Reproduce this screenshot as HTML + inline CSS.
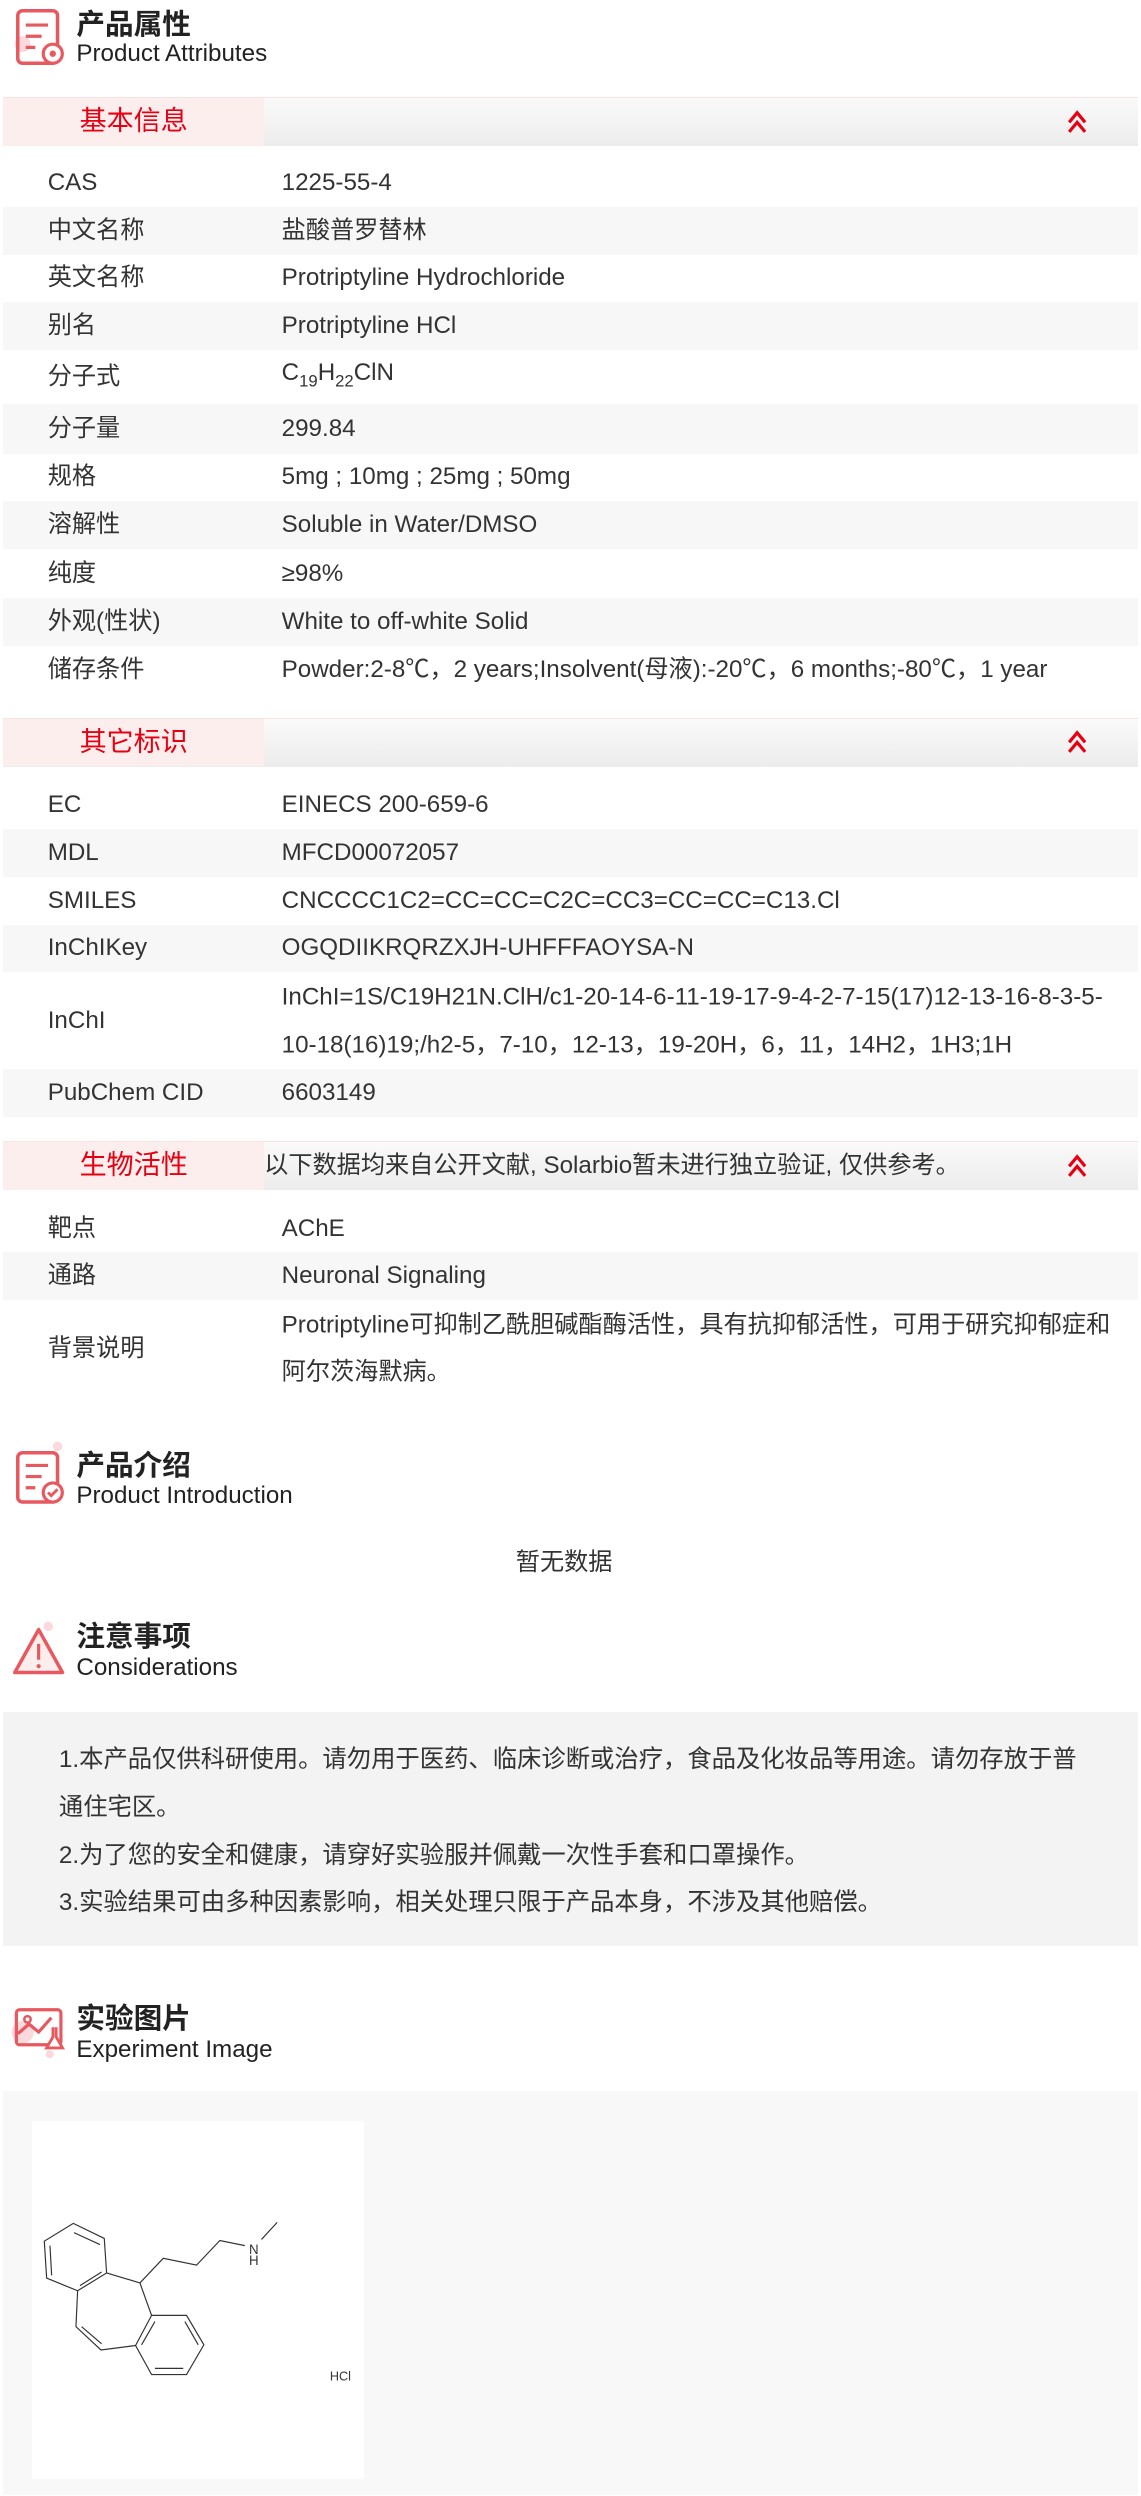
<!DOCTYPE html>
<html><head><meta charset="utf-8"><style>
*{margin:0;padding:0;box-sizing:border-box}
html,body{width:1141px;height:2496px;overflow:hidden;background:#fff}
#w{zoom:1.5914;width:717px;height:1568px;position:relative;font-family:"Liberation Sans","Noto Sans CJK SC",sans-serif;color:#333;font-size:15.2px}
.a{position:absolute}
.ht{position:absolute;left:48px;font-size:18px;font-weight:bold;color:#222;line-height:20px}
.hs{position:absolute;left:48px;font-size:15.2px;color:#222;line-height:16px}
.bar{position:absolute;left:2px;width:713px;height:31px;border-top:1px solid #f7e3e3;background:linear-gradient(#fafafa,#ececec)}
.bar .l{position:absolute;left:0;top:0;width:164px;height:30px;background:#fdeeee;color:#e60012;font-size:17px;text-align:center;line-height:30px}
.bar .c{position:absolute;left:668px;top:6px}
.bar .t{position:absolute;left:164px;top:0;line-height:30px;font-size:15.2px;color:#333;white-space:nowrap}
.r{position:absolute;left:2px;width:713px}
.r.g{background:#f7f7f7}
.r span{position:absolute;left:28px;top:50%;transform:translateY(-50%);line-height:30px}
.r b{font-weight:normal;position:absolute;left:175px;top:50%;transform:translateY(-50%);line-height:30px;white-space:nowrap}
sub{font-size:10.5px;vertical-align:-4px}
</style></head><body><div id="w">

<svg class="a" style="left:8px;top:4px" width="34" height="40" viewBox="0 0 34 40"><circle cx="6" cy="24" r="5" fill="#fbd9dc"/><rect x="3" y="3" width="25" height="33" rx="3" fill="none" stroke="#e8585f" stroke-width="2.2"/><path d="M8 12h14M8 19h10M8 26h6" stroke="#e8585f" stroke-width="2"/><circle cx="25" cy="30" r="6" fill="#fff" stroke="#e8585f" stroke-width="2"/><circle cx="25" cy="30" r="2" fill="#e8585f"/></svg>
<div class="ht" style="top:6px">产品属性</div>
<div class="hs" style="top:26px">Product Attributes</div>

<div class="bar" style="top:61px"><div class="l">基本信息</div><svg class="c" width="14" height="18" viewBox="0 0 14 18"><path d="M2 9L7 3L12 9M2 15L7 9L12 15" fill="none" stroke="#e60012" stroke-width="2"/></svg></div>

<div class="r" style="top:100px;height:30px"><span>CAS</span><b>1225-55-4</b></div>
<div class="r g" style="top:130px;height:30px"><span>中文名称</span><b>盐酸普罗替林</b></div>
<div class="r" style="top:160px;height:30px"><span>英文名称</span><b>Protriptyline Hydrochloride</b></div>
<div class="r g" style="top:190px;height:30px"><span>别名</span><b>Protriptyline HCl</b></div>
<div class="r" style="top:220px;height:34px"><span>分子式</span><b>C<sub>19</sub>H<sub>22</sub>ClN</b></div>
<div class="r g" style="top:254px;height:31px"><span>分子量</span><b>299.84</b></div>
<div class="r" style="top:285px;height:30px"><span>规格</span><b>5mg ; 10mg ; 25mg ; 50mg</b></div>
<div class="r g" style="top:315px;height:30px"><span>溶解性</span><b>Soluble in Water/DMSO</b></div>
<div class="r" style="top:345px;height:31px"><span>纯度</span><b>≥98%</b></div>
<div class="r g" style="top:376px;height:30px"><span>外观(性状)</span><b>White to off-white Solid</b></div>
<div class="r" style="top:406px;height:30px"><span>储存条件</span><b>Powder:2-8℃，2 years;Insolvent(母液):-20℃，6 months;-80℃，1 year</b></div>

<div class="bar" style="top:451px"><div class="l">其它标识</div><svg class="c" width="14" height="18" viewBox="0 0 14 18"><path d="M2 9L7 3L12 9M2 15L7 9L12 15" fill="none" stroke="#e60012" stroke-width="2"/></svg></div>

<div class="r" style="top:491px;height:30px"><span>EC</span><b>EINECS 200-659-6</b></div>
<div class="r g" style="top:521px;height:30px"><span>MDL</span><b>MFCD00072057</b></div>
<div class="r" style="top:551px;height:30px"><span>SMILES</span><b>CNCCCC1C2=CC=CC=C2C=CC3=CC=CC=C13.Cl</b></div>
<div class="r g" style="top:581px;height:30px"><span>InChIKey</span><b>OGQDIIKRQRZXJH-UHFFFAOYSA-N</b></div>
<div class="r" style="top:611px;height:61px"><span>InChI</span><b>InChI=1S/C19H21N.ClH/c1-20-14-6-11-19-17-9-4-2-7-15(17)12-13-16-8-3-5-<br>10-18(16)19;/h2-5，7-10，12-13，19-20H，6，11，14H2，1H3;1H</b></div>
<div class="r g" style="top:672px;height:30px"><span>PubChem CID</span><b>6603149</b></div>

<div class="bar" style="top:717px"><div class="l">生物活性</div><div class="t">以下数据均来自公开文献, Solarbio暂未进行独立验证, 仅供参考。</div><svg class="c" width="14" height="18" viewBox="0 0 14 18"><path d="M2 9L7 3L12 9M2 15L7 9L12 15" fill="none" stroke="#e60012" stroke-width="2"/></svg></div>

<div class="r" style="top:757px;height:30px"><span>靶点</span><b>AChE</b></div>
<div class="r g" style="top:787px;height:30px"><span>通路</span><b>Neuronal Signaling</b></div>
<div class="r" style="top:817px;height:61px"><span>背景说明</span><b>Protriptyline可抑制乙酰胆碱酯酶活性，具有抗抑郁活性，可用于研究抑郁症和<br>阿尔茨海默病。</b></div>

<svg class="a" style="left:8px;top:905px" width="34" height="42" viewBox="0 0 34 42"><circle cx="28" cy="4" r="3" fill="#fbd9dc"/><rect x="3" y="8" width="25" height="31" rx="3" fill="none" stroke="#e8585f" stroke-width="2.2"/><path d="M8 16h14M8 23h10M8 30h6" stroke="#e8585f" stroke-width="2"/><circle cx="25" cy="33" r="6" fill="#fff" stroke="#e8585f" stroke-width="2"/><path d="M22 33l2 2 4-4" fill="none" stroke="#e8585f" stroke-width="1.8"/></svg>
<div class="ht" style="top:912px">产品介绍</div>
<div class="hs" style="top:932px">Product Introduction</div>

<div class="a" style="left:0;width:709px;text-align:center;top:969px;font-size:15.2px">暂无数据</div>

<svg class="a" style="left:6px;top:1018px" width="36" height="36" viewBox="0 0 36 36"><circle cx="24" cy="4" r="3" fill="#fbd9dc"/><path d="M18 6L33 33H3Z" fill="#fdeeee" stroke="#e8585f" stroke-width="2.2" stroke-linejoin="round"/><path d="M18 15v10" stroke="#e8585f" stroke-width="2"/><circle cx="18" cy="29" r="1.3" fill="#e8585f"/></svg>
<div class="ht" style="top:1019px">注意事项</div>
<div class="hs" style="top:1040px">Considerations</div>

<div class="a" style="left:2px;top:1076px;width:713px;height:147px;background:#f3f3f3;padding:15px 0 0 35px;line-height:30px;font-size:15.3px;white-space:nowrap">1.本产品仅供科研使用。请勿用于医药、临床诊断或治疗，食品及化妆品等用途。请勿存放于普<br>通住宅区。<br>2.为了您的安全和健康，请穿好实验服并佩戴一次性手套和口罩操作。<br>3.实验结果可由多种因素影响，相关处理只限于产品本身，不涉及其他赔偿。</div>

<svg class="a" style="left:6px;top:1260px" width="36" height="34" viewBox="0 0 36 34"><circle cx="8" cy="17" r="7" fill="#fbd9dc"/><circle cx="25" cy="31" r="2.5" fill="#fbd9dc"/><rect x="4" y="3" width="28" height="22" rx="2" fill="none" stroke="#e8585f" stroke-width="2"/><circle cx="11" cy="9" r="2" fill="none" stroke="#e8585f" stroke-width="1.6"/><path d="M5 18l7-6 6 5 8-9" fill="none" stroke="#e8585f" stroke-width="2"/><path d="M27 14v6l-4 7h10l-4-7v-6" fill="#fff" stroke="#e8585f" stroke-width="1.8"/></svg>
<div class="ht" style="top:1259px">实验图片</div>
<div class="hs" style="top:1280px">Experiment Image</div>

<div class="a" style="left:2px;top:1314px;width:713px;height:254px;background:#f8f8f8"></div>
<div class="a" style="left:20px;top:1333px;width:209px;height:225px;background:#fff"></div>
<svg class="a" style="left:0;top:1231px" width="314" height="337" viewBox="0 0 1500 1568" preserveAspectRatio="none">
<g fill="none" stroke="#333" stroke-width="3.5">
<path d="M220 773L313 817L320 918L233 970L140 933L133 825Z"/>
<path d="M222 800L300 835M305 915L240 955M150 838L155 925"/>
<path d="M320 918L420 947M233 970L228 1075L303 1143L407 1130M245 1075L305 1125"/>
<path d="M420 947L455 1042L560 1042L612 1128L560 1215L455 1215L407 1130L455 1042"/>
<path d="M465 1060L425 1128M555 1060L595 1128M465 1197L550 1197"/>
<path d="M420 947L490 875L590 895L660 823L735 838M785 820L832 770"/>
</g>
<text x="762" y="862" font-family="Liberation Sans" font-size="40" fill="#333" text-anchor="middle">N</text>
<text x="762" y="895" font-family="Liberation Sans" font-size="40" fill="#333" text-anchor="middle">H</text>
<text x="1022" y="1232" font-family="Liberation Sans" font-size="38" fill="#333" text-anchor="middle">HCl</text>
</svg>

</div></body></html>
